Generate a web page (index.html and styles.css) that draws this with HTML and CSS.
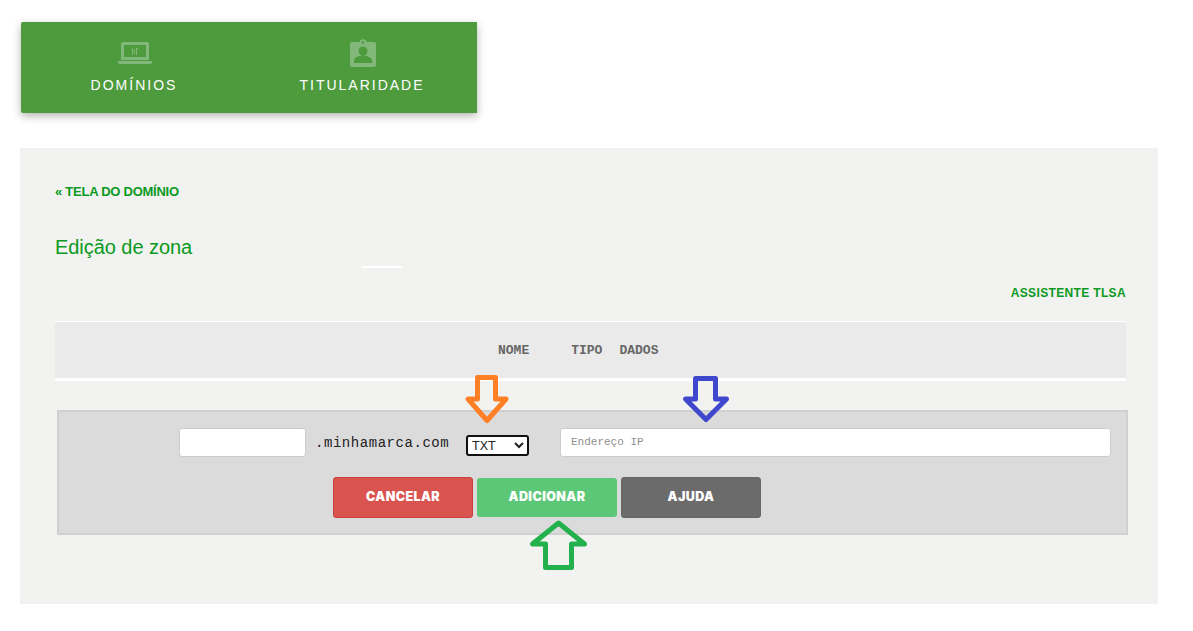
FILE: index.html
```html
<!DOCTYPE html>
<html lang="en">
<head>
    <meta charset="UTF-8">
    <meta name="viewport" content="width=device-width, initial-scale=1.0">
    <title>Edição de zona</title>
    <link rel="stylesheet" href="styles.css">
</head>
<body>
    <nav class="tabs">
        <a class="tab" href="#">
            <svg class="tab-icon" width="34" height="24" viewBox="0 0 34 24">
                <path d="M5 1h24a2 2 0 0 1 2 2v16h-28v-16a2 2 0 0 1 2-2zM6 4v12h22v-12z" fill-rule="evenodd"/>
                <path d="M0 20h34v1a2 2 0 0 1-2 2h-30a2 2 0 0 1-2-2z"/>
                <path d="M14 7h1v7h-1zM16 8h1v5h-1zM18 7h2v1h-1v6h-1z"/>
            </svg>
            <span>DOMÍNIOS</span>
        </a>
        <a class="tab" href="#">
            <svg class="tab-icon tab-icon-badge" width="26" height="28" viewBox="0 0 26 28">
                <path fill-rule="evenodd" d="M2 3h7.500a3.600 3.600 0 0 1 7 0h7.500a2 2 0 0 1 2 2v21a2 2 0 0 1-2 2h-22a2 2 0 0 1-2-2v-21a2 2 0 0 1 2-2zM13 2.200a1.300 1.300 0 1 0 .01 0zM13 7.500a4.500 4.500 0 1 0 .01 0zM4 24h18v-2.500c0-3.500-6-5-9-5s-9 1.500-9 5z"/>
            </svg>
            <span>TITULARIDADE</span>
        </a>
    </nav>

    <main class="panel">
        <a class="back-link" href="#">« TELA DO DOMÍNIO</a>
        <h1 class="title">Edição de zona</h1>
        <div class="title-rule"></div>
        <div class="actions"><a class="tlsa-link" href="#">ASSISTENTE TLSA</a></div>

        <div class="zone-head">
            <span class="col-name">NOME</span>
            <span class="col-type">TIPO</span>
            <span class="col-data">DADOS</span>
        </div>

        <form class="zone-form">
            <div class="form-row">
                <input class="input input-name" type="text">
                <span class="domain">.minhamarca.com</span>
                <select class="type-select">
                    <option>TXT</option>
                </select>
                <input class="input input-data" type="text" placeholder="Endereço IP">
            </div>
            <div class="form-buttons">
                <button class="btn btn-cancel" type="button">CANCELAR</button>
                <button class="btn btn-add" type="button">ADICIONAR</button>
                <button class="btn btn-help" type="button">AJUDA</button>
            </div>
        </form>
        <div class="panel-line"></div>
    </main>

    <!-- arrows drawn on top of the screenshot -->
    <svg class="arrows" width="1193" height="631" viewBox="0 0 1193 631">
        <path class="arrow" stroke="#ff7f27" d="M477.500 377.500h18v21.500h10.500l-19 21.500-19-21.500h9.500z"/>
        <path class="arrow" stroke="#3f48cc" d="M695.500 378.500h20v20.500h11l-20.500 20.500-20.500-20.500h10z"/>
        <path class="arrow" stroke="#22b14c" d="M545.500 567.500h26v-23.500h13l-26-21-26 21h13z"/>
    </svg>
</body>
</html>
```

FILE: styles.css
```css
* {
    margin: 0;
    padding: 0;
    box-sizing: border-box;
}

body {
    position: relative;
    width: 1193px;
    height: 631px;
    overflow: hidden;
    background: #fff;
    font-family: 'Liberation Sans', Arial, sans-serif;
    padding-top: 22px;
}

.tabs {
    display: flex;
    width: 456px;
    height: 91px;
    margin-left: 21px;
    background: #4d9b3d;
    border-radius: 2px 0 0 2px;
    box-shadow: 0 3px 8px rgba(0, 0, 0, 0.3);
}

.tab {
    flex: 1;
    display: flex;
    flex-direction: column;
    align-items: center;
    justify-content: flex-end;
    padding: 0 2px 20px 0;
    color: #fff;
    text-decoration: none;
    font-size: 14px;
    line-height: 16px;
    letter-spacing: 2px;
}

.tab-icon {
    fill: #82b97a;
    margin: 0 -2px 12px 0;
}

.tab-icon-badge {
    margin-bottom: 10px;
}

.panel {
    width: 1138px;
    height: 456px;
    margin: 35px 0 0 20px;
    padding: 36px 32px 0 35px;
    background: #f2f2f0;
    position: relative;
}

.back-link {
    display: block;
    height: 16px;
    font-size: 13px;
    line-height: 16px;
    font-weight: bold;
    letter-spacing: -0.25px;
    color: #0a9a22;
    text-decoration: none;
}

.title {
    margin-top: 35px;
    font-size: 20px;
    line-height: 24px;
    font-weight: normal;
    letter-spacing: -0.05px;
    color: #0a9a22;
}

.title-rule {
    width: 40px;
    height: 2px;
    margin: 7px 0 0 307px;
    background: #fff;
}

.actions {
    margin-top: 15px;
    text-align: right;
}

.tlsa-link {
    font-size: 12px;
    line-height: 16px;
    font-weight: bold;
    letter-spacing: 0.35px;
    color: #0a9a22;
    text-decoration: none;
}

.zone-head {
    display: flex;
    align-items: center;
    height: 60px;
    margin-top: 20px;
    border-top: 1px solid #fff;
    border-bottom: 3px solid #fff;
    background: #eaeaea;
    font-family: 'Liberation Mono', monospace;
    font-size: 13px;
    font-weight: bold;
    color: #666;
}

.col-name {
    margin-left: 443px;
}

.col-type {
    margin-left: 42px;
}

.col-data {
    margin-left: 17px;
}

.zone-form {
    width: 1071px;
    height: 125px;
    margin: 29px 0 0 2px;
    padding: 16px 15px 0 120px;
    background: #dbdbdb;
    border: 2px solid #d0d0d0;
}

.form-row {
    display: flex;
    align-items: flex-start;
}

.input {
    height: 29px;
    background: #fff;
    border: 1px solid #ccc;
    border-radius: 3px;
    outline: none;
}

.input-name {
    width: 127px;
}

.input-data {
    width: 551px;
    padding: 0 0 2px 10px;
    font-family: 'Liberation Mono', monospace;
    font-size: 11px;
}

.input-data::placeholder {
    color: #8f8f8f;
}

.domain {
    margin: 7px 0 0 9px;
    width: 151px;
    font-family: 'Liberation Mono', monospace;
    font-size: 14px;
    line-height: 16px;
    letter-spacing: 0.55px;
    color: #222;
}

.type-select {
    width: 63px;
    height: 21px;
    margin: 7px 31px 0 0;
    padding-left: 0;
    background: #fff;
    border: 2px solid #111;
    border-radius: 3px;
    font-family: 'Liberation Sans', Arial, sans-serif;
    font-size: 12.500px;
    color: #222;
}

.form-buttons {
    display: flex;
    align-items: center;
    gap: 4px;
    margin: 20px 0 0 154px;
}

.btn {
    width: 140px;
    height: 41px;
    padding-bottom: 2px;
    border: 1px solid transparent;
    border-radius: 3px;
    color: #fff;
    font-family: 'Inter', sans-serif;
    font-size: 12.500px;
    font-weight: 900;
    letter-spacing: 0.4px;
}

.btn-cancel {
    background: #d9534f;
    border-color: #c9403c;
}

.btn-add {
    height: 39px;
    background: #5cc877;
    border: none;
}

.btn-help {
    background: #6b6b6b;
    border-color: #666;
}

.panel-line {
    height: 1px;
    margin-top: 38px;
    background: #f4f4f2;
}

.arrows {
    position: absolute;
    top: 0;
    left: 0;
    pointer-events: none;
}

.arrow {
    fill: none;
    stroke-width: 5;
    stroke-linejoin: round;
}
```
